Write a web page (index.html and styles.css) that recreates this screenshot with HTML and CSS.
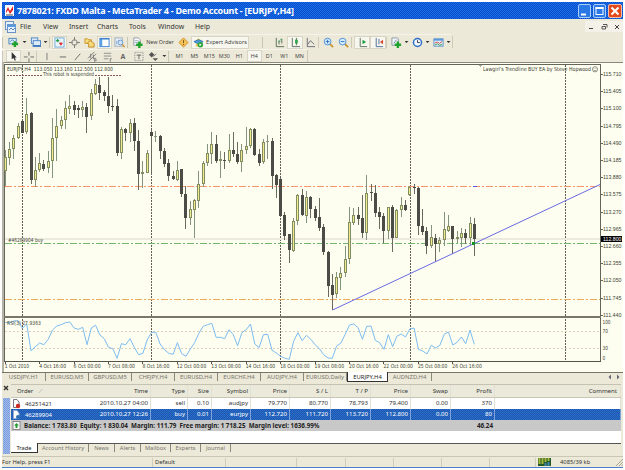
FILE: index.html
```html
<!DOCTYPE html>
<html lang="en">
<head>
    <meta charset="UTF-8">
    <title>7878021: FXDD Malta - MetaTrader 4</title>
    <link rel="stylesheet" href="styles.css">
</head>
<body>
<div class="window">
    <div class="titlebar">
        <svg class="logo" width="9" height="11" viewBox="0 0 9 11"><rect width="9" height="11" fill="#fff"/><path d="M1 6L3 2L5 6L8 1V5L5 9L3 5L1 8Z" fill="#e02020"/><path d="M1 10H8" stroke="#444"/></svg>
        <span class="title">7878021: FXDD Malta - MetaTrader 4 - Demo Account - [EURJPY,H4]</span>
        <div class="winbtns">
            <svg width="13" height="14" viewBox="0 0 13 14"><rect x=".5" y=".5" width="12" height="13" rx="1.5" fill="#2878e6" stroke="#a9ccf8"/><path d="M3 10.5H8" stroke="#fff" stroke-width="2"/></svg>
            <svg width="13" height="14" viewBox="0 0 13 14"><rect x=".5" y=".5" width="12" height="13" rx="1.5" fill="#2878e6" stroke="#a9ccf8"/><rect x="3" y="3.5" width="7" height="7" fill="none" stroke="#fff"/><path d="M2.5 4H10.5" stroke="#fff" stroke-width="2"/></svg>
            <svg width="14" height="14" viewBox="0 0 14 14"><rect x=".5" y=".5" width="13" height="13" rx="1.5" fill="#e4491c" stroke="#f3bda8"/><path d="M3.5 3.5L10.5 10.5M10.5 3.5L3.5 10.5" stroke="#fff" stroke-width="2"/></svg>
        </div>
    </div>

    <div class="menubar">
        <svg class="menu-icon" width="11" height="12" viewBox="0 0 11 12"><rect x=".5" y=".5" width="8" height="8" fill="#e8f2fc" stroke="#6a94c8"/><rect x="2.500" y="3.500" width="8" height="8" fill="#e8f2fc" stroke="#6a94c8"/><path d="M2 5H11" stroke="#5a9be0" stroke-width="2"/><path d="M4 9L6 7L8 9L10 7" stroke="#5a86b8" fill="none"/></svg>
        <span class="m-file">File</span><span class="m-view">View</span><span class="m-insert">Insert</span><span class="m-charts">Charts</span><span class="m-tools">Tools</span><span class="m-window">Window</span><span class="m-help">Help</span>
        <div class="mdi">
            <svg width="12" height="11" viewBox="0 0 12 11"><path d="M4 7.500H8" stroke="#444"/></svg>
            <svg width="12" height="11" viewBox="0 0 12 11"><path d="M5 3.500H9V6.500M4 5.500H7.500V8H4Z" stroke="#555" fill="none"/></svg>
            <svg width="12" height="11" viewBox="0 0 12 11"><path d="M4 4L8 8M8 4L4 8" stroke="#444"/></svg>
        </div>
    </div>

    <div class="toolbar standard">
        <i class="grip"></i>
        <span class="tool"><svg viewBox="0 0 12 12"><rect x="1" y="1.500" width="8" height="6" fill="#d8ecf8" stroke="#4b86bb"/><path d="M2.500 5L5 3L7 5" stroke="#4b86bb" fill="none"/><path d="M7.500 4.500V11M4.500 7.700H11" stroke="#1fa12e" stroke-width="2.600"/></svg></span>
        <i class="drop"></i>
        <span class="tool w14"><svg viewBox="0 0 12 12"><rect x="1.500" y="1" width="7" height="6" fill="#dcebf8" stroke="#4b82c4"/><rect x="3.500" y="4" width="8" height="6" fill="#dcebf8" stroke="#4b82c4"/><path d="M3 9.700H12" stroke="#3e7ac0" stroke-width="2"/></svg></span>
        <i class="drop"></i>
        <i class="sep"></i>
        <span class="tool pressed"><svg viewBox="0 0 12 12"><rect x="1" y="1" width="10" height="10" fill="#e9f4fb" stroke="#6fa8d6"/><path d="M2.500 4L4 2.500L5.500 4ZM3 5H5" stroke="#1b9a40" fill="#1b9a40"/><path d="M6 6.500H9L7.500 9Z" fill="#d33" stroke="#d33"/></svg></span>
        <span class="tool"><svg viewBox="0 0 12 12"><circle cx="6" cy="6" r="3" fill="none" stroke="#777"/><path d="M6 0V4M6 8V12M0 6H4M8 6H12" stroke="#777"/></svg></span>
        <span class="tool"><svg viewBox="0 0 12 12"><path d="M1 2H4L5 3H8V7H1Z" fill="#f6dc83" stroke="#c89628"/><path d="M4 6L7 4L11 7V11H5V8Z" fill="#f8d878" stroke="#c08a28"/></svg></span>
        <span class="tool pressed"><svg viewBox="0 0 12 12"><rect x="1" y="1.500" width="10" height="9" fill="#fff" stroke="#3c80cc"/><rect x="1" y="2" width="2.500" height="8" fill="#5aa0e8"/><path d="M1 2H11" stroke="#3c80cc" stroke-width="1.500"/></svg></span>
        <span class="tool"><svg viewBox="0 0 12 12"><rect x="1" y="1" width="8" height="9" fill="#eef3f8" stroke="#9ab"/><path d="M3 4V8M5 3V6" stroke="#7a9cc4"/><circle cx="7" cy="6" r="2.600" fill="#cfe6fa" stroke="#6a98cc"/><path d="M9 8L11.500 11" stroke="#c99432" stroke-width="1.500"/></svg></span>
        <i class="grip wide"></i>
        <span class="tool neworder"><svg viewBox="0 0 12 12"><path d="M2 1H7L9 3V9H2Z" fill="#fff" stroke="#8a98a8"/><path d="M3 4H7M3 6H7" stroke="#9ab"/><path d="M8 5V12M4.500 8.500H11.500" stroke="#1fa12e" stroke-width="2.600"/></svg>New Order</span>
        <span class="tool w16"><svg viewBox="0 0 12 12"><path d="M6 1L11 6L6 11L1 6Z" fill="#f3c25a" stroke="#d08e20"/><path d="M6 3.500V6.500M6 7.500V8.700" stroke="#7b4a10"/></svg></span>
        <span class="tool pressed experts"><svg viewBox="0 0 12 12"><path d="M3 4Q6-1 9 4" fill="#f0c850"/><path d="M1 5L6 3L11 5L6 8Z" fill="#4f9bd8" stroke="#3276b4"/><path d="M3 7V10L6 11V8" fill="#f0c850"/><circle cx="8" cy="8.500" r="3" fill="#27a53a"/><path d="M7 7L9.500 8.500L7 10Z" fill="#fff"/></svg>Expert Advisors</span>
        <i class="gap"></i>
        <i class="grip far"></i>
        <span class="tool w16"><svg viewBox="0 0 12 12"><path d="M2.500 1V10.500H11M5.500 4V8M8.500 2V7" stroke="#556b55" fill="none"/><path d="M5 4.500H7M7 2.500H8.500" stroke="#1d9a48"/></svg></span>
        <span class="tool w16 pressed"><svg viewBox="0 0 12 12"><path d="M2.500 1V10.500H11M7 1V9" stroke="#556b55" fill="none"/><rect x="5.500" y="3" width="3" height="4" fill="#2ca84c"/></svg></span>
        <span class="tool"><svg viewBox="0 0 12 12"><path d="M2.500 1V10.500H11M3 8L6 4L10 8" stroke="#667" fill="none"/></svg></span>
        <i class="sep"></i>
        <span class="tool"><svg viewBox="0 0 12 12"><path d="M7 7L11 11" stroke="#c99432" stroke-width="2"/><circle cx="5" cy="5" r="3.700" fill="#d4ebfc" stroke="#4a8fd6"/><path d="M3 5H7M5 3V7" stroke="#2c6fc0"/></svg></span>
        <span class="tool"><svg viewBox="0 0 12 12"><path d="M7 7L11 11" stroke="#c99432" stroke-width="2"/><circle cx="5" cy="5" r="3.700" fill="#d4ebfc" stroke="#4a8fd6"/><path d="M3 5H7" stroke="#2c6fc0"/></svg></span>
        <i class="sep"></i>
        <span class="tool w16 pressed"><svg viewBox="0 0 12 12"><path d="M3.500 1V10.500H11" stroke="#556b55" fill="none"/><path d="M6 3L10 5.500L6 8Z" fill="#20a040"/></svg></span>
        <span class="tool w16 pressed"><svg viewBox="0 0 12 12"><path d="M3.500 1V10.500H11M6.500 2V8" stroke="#4a6a9a" fill="none"/><path d="M11 3L7.500 5.500L11 8Z" fill="#d84830"/></svg></span>
        <i class="sep"></i>
        <span class="tool w14"><svg viewBox="0 0 12 12"><path d="M1 1H7L8 2V9H1Z" fill="#f2f4f6" stroke="#8a98a8"/><path d="M3 7L6 3" stroke="#78a"/><path d="M7.500 5V12M4 8.500H11" stroke="#1fa12e" stroke-width="2.600"/></svg></span>
        <i class="drop"></i>
        <span class="tool w14"><svg viewBox="0 0 12 12"><circle cx="6" cy="6" r="4.400" fill="#eff7ff" stroke="#2d6ec4" stroke-width="1.600"/><path d="M6 3.500V6H8.500" stroke="#335" fill="none"/></svg></span>
        <i class="drop"></i>
        <span class="tool w14"><svg viewBox="0 0 12 12"><rect x="1" y="2" width="10" height="8" fill="#e6f2fb" stroke="#5a90c8"/><path d="M1 3H11" stroke="#5a98dc" stroke-width="2"/><path d="M2 6.500L5 5.500L7 7L10 5" stroke="#c44" fill="none"/><path d="M2 8.500L5 7.500L7 9L10 8" stroke="#3a9a50" fill="none"/></svg></span>
        <i class="drop"></i>
        <i class="end"></i>
    </div>

    <div class="toolbar line">
        <i class="grip"></i>
        <span class="tool pressed"><svg viewBox="0 0 12 12"><path d="M4 1V9L6 7.500L7.500 10.500L8.500 10L7.500 7H9.500Z" fill="#333"/></svg></span>
        <span class="tool"><svg viewBox="0 0 12 12"><path d="M6.500 1V5M6.500 8V12M1 6.500H5M8 6.500H12" stroke="#666"/></svg></span>
        <i class="sep"></i>
        <span class="tool"><svg viewBox="0 0 12 12"><path d="M6.500 2V10" stroke="#777"/></svg></span>
        <span class="tool"><svg viewBox="0 0 12 12"><path d="M3 6.500H10" stroke="#666"/></svg></span>
        <span class="tool"><svg viewBox="0 0 12 12"><path d="M3 10L9 3" stroke="#666"/></svg></span>
        <span class="tool"><svg viewBox="0 0 12 12"><path d="M1 8L8 1M2 11L10 3M4 3V8M7 4V9M8 10H11M8 8H10M8.500 8V12" stroke="#777" fill="none"/></svg></span>
        <span class="tool"><svg viewBox="0 0 12 12"><path d="M2 2.500H10M2 5.500H10M2 8.500H7M9 8V12M9 8.500H11" stroke="#888" fill="none"/></svg></span>
        <span class="tool letter">A</span>
        <span class="tool"><svg viewBox="0 0 12 12"><rect x="2" y="1.500" width="9" height="9" fill="none" stroke="#888" stroke-dasharray="1 1"/><path d="M4 4.500H9M6.500 4V9" stroke="#666"/></svg></span>
        <span class="tool"><svg viewBox="0 0 12 12"><path d="M1 4L4 1L7 4L4 7ZM5 8H11L8 11Z" fill="#555"/><path d="M6 6L9 3" stroke="#777"/></svg></span>
        <i class="drop"></i>
        <i class="grip"></i>
        <span class="tf">M1</span><span class="tf">M5</span><span class="tf">M15</span><span class="tf">M30</span><span class="tf">H1</span><span class="tf pressed">H4</span><span class="tf">D1</span><span class="tf">W1</span><span class="tf">MN</span>
        <i class="end"></i>
    </div>

    <svg class="chart" id="chart" width="621" height="310" viewBox="2 62 621 310"></svg>

    <div class="chart-tabs">
        <span class="t1">USDJPY,H1</span><span class="t2">EURUSD,M5</span><span class="t3">GBPUSD,M5</span><span class="t4">CHFJPY,H4</span><span class="t5">EURUSD,H4</span><span class="t6">EURCHF,H4</span><span class="t7">AUDJPY,H4</span><span class="t8">EURUSD,Daily</span><span class="t9 active">EURJPY,H4</span><span class="t10">AUDNZD,H4</span>
        <svg class="scroll" width="14" height="8" viewBox="0 0 14 8"><path d="M4 1.500V6.500L1.500 4ZM10 1.500V6.500L12.500 4Z" fill="#667"/></svg>
    </div>

    <div class="terminal">
        <div class="side">
            <svg width="8" height="8" viewBox="0 0 8 8"><path d="M2 2L6 6M6 2L2 6" stroke="#333" stroke-width="1.400"/></svg>
            <div class="side-label"></div>
        </div>
        <div class="panel">
            <div class="row head">
                <span class="first">Order &nbsp; <em>∕</em></span><span>Time</span><span>Type</span><span>Size</span><span>Symbol</span><span>Price</span><span>S / L</span><span>T / P</span><span>Price</span><span>Swap</span><span>Profit</span><span>Comment</span>
            </div>
            <div class="row">
                <span class="first"><svg width="9" height="10" viewBox="0 0 9 10"><path d="M1.500.500H5L7 3V8.500H1.500Z" fill="#fff" stroke="#777"/><circle cx="6" cy="7" r="2.200" fill="#d02a20"/></svg>46251421</span><span>2010.10.27 04:00</span><span>sell</span><span>0.10</span><span>audjpy</span><span>79.770</span><span>80.770</span><span>78.793</span><span>79.400</span><span>0.00</span><span>370</span><span></span>
            </div>
            <div class="row selected">
                <span class="first"><svg width="9" height="10" viewBox="0 0 9 10"><path d="M1.500.500H5L7 3V8.500H1.500Z" fill="#fff" stroke="#9ac"/><circle cx="6" cy="7" r="2" fill="#2b70b0"/></svg>46289904</span><span>2010.10.27 12:26</span><span>buy</span><span>0.01</span><span>eurjpy</span><span>112.720</span><span>111.720</span><span>113.720</span><span>112.800</span><span>0.00</span><span>80</span><span></span>
            </div>
            <div class="summary">
                <svg width="9" height="9" viewBox="0 0 9 9"><rect x="1" y=".5" width="7" height="8" fill="#fff" stroke="#888"/><path d="M4.500 2L7 4.500H5.500V7H3.500V4.500H2Z" fill="#259a35"/></svg>
                <span class="balance">Balance: 1 783.80&nbsp; Equity: 1 830.04&nbsp; Margin: 111.79&nbsp; Free margin: 1 718.25&nbsp; Margin level: 1636.99%</span>
                <span class="total">46.24</span>
            </div>
            <div class="blank"></div>
            <div class="term-tabs">
                <span class="active">Trade</span><span class="w51">Account History</span><span class="w26">News</span><span class="w26">Alerts</span><span class="w30">Mailbox</span><span class="w30">Experts</span><span class="w30">Journal</span>
            </div>
        </div>
    </div>

    <div class="status">
        <span class="s1">For Help, press F1</span><span class="s2">Default</span><span class="s3"></span><span class="s4"></span><span class="s5"></span><span class="s6"></span><span class="s7"></span><span class="s8"></span>
        <svg width="13" height="8" viewBox="0 0 13 8"><rect width="13" height="8" fill="#24592c"/><path d="M1.500 0V6M4.500 0V6M7.500 0V4M10.500 0V3" stroke="#a4b83c" stroke-width="2"/><path d="M7.500 5V8M10.500 4V8" stroke="#3d86a8" stroke-width="2"/></svg>
        <span class="traffic">4085/39 kb</span>
        <svg class="resize" width="8" height="8" viewBox="0 0 8 8"><path d="M1 8L8 1M4 8L8 4M6.500 8L8 6.500" stroke="#a9a694"/></svg>
    </div>
</div>
<script src="chart.js"></script>
</body>
</html>
```
FILE: styles.css
```css
* {
    margin: 0;
    padding: 0;
    box-sizing: border-box;
}

body {
    width: 625px;
    height: 470px;
    padding: 2px;
    background: #fff;
    overflow: hidden;
    font-family: "Noto Sans", sans-serif;
    font-size: 6.1px;
    color: #333;
}

.window {
    width: 621px;
    height: 466px;
    background-color: #ece9d8;
    border-bottom: 1px solid #4b7fc8;
    display: flex;
    flex-direction: column;
}

svg {
    display: block;
    flex: none;
}

/* title bar */
.titlebar {
    height: 17px;
    display: flex;
    align-items: center;
    padding: 0 1px 0 3px;
    background: repeating-conic-gradient(#0d4cc6 0 25%, #1670ec 0 50%) 0 0 / 2px 2px;
}

.title {
    margin-left: 3px;
    font-size: 9px;
    font-weight: bold;
    letter-spacing: -0.26px;
    color: #fff;
    white-space: nowrap;
}

.winbtns {
    margin-left: auto;
    display: flex;
    gap: 2px;
}

/* menu */
.menubar {
    height: 15px;
    display: flex;
    align-items: center;
    padding-left: 3px;
    font-size: 6.9px;
    white-space: nowrap;
}

.menu-icon { margin-right: 4px; }
.m-file { width: 23px; }
.m-view { width: 26px; }
.m-insert { width: 28px; }
.m-charts { width: 32px; }
.m-tools { width: 29px; }
.m-window { width: 37px; }

.mdi {
    display: flex;
    margin-left: auto;
    gap: 1px;
    background: #f4f2e8;
}

/* toolbars */
.toolbar {
    display: flex;
    align-items: center;
    border-top: 1px solid #f6f4ea;
    color: #444;
}

.standard {
    height: 15px;
    width: 449px;
}

.line {
    height: 13px;
    width: 306px;
}

.toolbar i {
    display: block;
    flex: none;
}

.grip {
    width: 4px;
    height: 11px;
    border-left: 1px solid #c9c6b4;
}

.grip.far { width: 9px; margin-left: 1px; }

.sep {
    width: 3px;
    height: 11px;
    border-left: 1px solid #cdcab8;
}

.gap { width: 12px; }

.end {
    width: 1px;
    height: 12px;
    background: #cdcab8;
}

.drop {
    width: 4px;
    height: 2px;
    margin: 0 1.5px;
    background: #333;
    clip-path: polygon(0 0, 100% 0, 50% 100%);
}

.tool {
    width: 15px;
    height: 13px;
    display: flex;
    align-items: center;
    justify-content: center;
    flex: none;
    white-space: nowrap;
}

.tool svg {
    width: 11px;
    height: 11px;
}

.w14 { width: 14px; }
.w16 { width: 16px; }

.pressed {
    background: #f7f6ef;
    border: 1px solid #d8d5c5;
}

.neworder {
    width: 44px;
    gap: 3px;
    font-size: 5.4px;
}

.experts {
    width: 58px;
    gap: 2px;
    font-size: 5.6px;
}

.line .tool {
    height: 12px;
    width: 15.2px;
}

.letter {
    font-weight: bold;
    font-size: 7px;
    color: #666;
}

.tf {
    width: 15px;
    height: 12px;
    display: flex;
    align-items: center;
    justify-content: center;
    flex: none;
    font-size: 5.4px;
}

/* chart */
.chart {
    font-family: "DejaVu Sans", sans-serif;
    font-size: 5.6px;
}

.chart text { fill: #3f3f36; }

.chart .price {
    font-family: "Liberation Sans", sans-serif;
    font-size: 5.4px;
}

.chart .last { fill: #fff; }

/* chart tabs */
.chart-tabs {
    height: 10px;
    display: flex;
    border-top: 1px solid #77756a;
    color: #77756c;
    font-size: 5.9px;
    line-height: 8px;
    flex: none;
    white-space: nowrap;
}

.chart-tabs span {
    height: 8px;
    border-right: 1px solid #8c897a;
    text-align: center;
}

.t1 { width: 44px; }
.t2, .t3, .t4, .t5, .t6, .t7 { width: 43px; }
.t8 { width: 43px; }
.t10 { width: 44px; }

.chart-tabs .active {
    width: 41px;
    height: 10px;
    margin-top: -1px;
    padding-top: 1px;
    background: #fff;
    border: 1px solid #333;
    border-top: 0;
    color: #222;
}

.scroll {
    margin-left: auto;
    margin-right: 2px;
}

/* terminal */
.terminal {
    height: 70px;
    margin-top: 2px;
    display: flex;
}

.side {
    width: 9px;
    display: flex;
    flex-direction: column;
}

.side-label {
    flex: 1;
    width: 7px;
    margin: 6px 0 0 1px;
    background: repeating-conic-gradient(#7f9fdc 0 25%, #9db8ec 0 50%) 0 0 / 2px 2px;
}

.panel {
    width: 610px;
    border-top: 1px solid #c5c2b2;
}

.row {
    height: 11px;
    display: grid;
    grid-template-columns: 47px 93px 37px 24px 39px 39px 41px 40px 40px 40px 44px 126px;
    background: #fff;
    line-height: 10px;
}

.row span {
    text-align: right;
    padding-right: 2px;
    border-right: 1px solid #e3e1d6;
    white-space: nowrap;
}

.row .first {
    display: flex;
    align-items: center;
    border-right: 0;
    padding-left: 1px;
    gap: 4px;
    font-size: 5.9px;
}

.head {
    height: 13px;
    background: #ebe9da;
    border-bottom: 1px solid #c9c6b6;
    line-height: 12px;
}

.head .first { padding-left: 6px; }
.head em { color: #999; }
.head span:last-child { padding-right: 3px; }

.selected {
    color: #fff;
    background: repeating-conic-gradient(#1c55b4 0 25%, #2b70c4 0 50%) 0 0 / 2px 2px;
}

.selected span { border-color: #7da2dc; }

.summary {
    height: 11px;
    display: flex;
    align-items: center;
    background: #c8c8c8;
    padding-left: 1px;
    font-weight: bold;
    font-size: 6.25px;
    color: #222;
    white-space: nowrap;
}

.balance { margin-left: 3px; }

.total {
    margin-left: auto;
    margin-right: 128px;
}

.blank {
    height: 13px;
    background: #fff;
    border-bottom: 1px solid #555;
}

.term-tabs {
    height: 10px;
    display: flex;
    line-height: 9px;
    font-size: 5.7px;
    color: #77756c;
    white-space: nowrap;
}

.term-tabs span {
    height: 8px;
    text-align: center;
    border-right: 1px solid #8c897a;
}

.term-tabs .active {
    width: 27px;
    height: 10px;
    margin-top: -1px;
    background: #fff;
    border-right: 1px solid #333;
    border-bottom: 1px solid #333;
    color: #222;
    line-height: 10px;
}

.term-tabs .w51 { width: 51px; }
.term-tabs .w26 { width: 26px; }
.term-tabs .w30 { width: 30px; }

/* status bar */
.status {
    margin-top: 2px;
    flex: 1;
    display: flex;
    align-items: center;
    border-top: 1px solid #c9c6b6;
    font-size: 5.8px;
    white-space: nowrap;
}

.status span {
    height: 9px;
    line-height: 9px;
    border-right: 1px solid #cfccbc;
}

.s1 { width: 151px; }
.status .s2 { width: 73px; padding-left: 2px; }
.s3 { width: 71px; }
.s4 { width: 49px; }
.s5 { width: 48px; }
.s6 { width: 48px; }
.s7 { width: 48px; }
.s8 { width: 46px; }

.status svg { margin-left: 2px; }

.status .traffic {
    margin-left: 9px;
    border: 0;
}

.status .resize { margin-left: auto; }
```
FILE: chart.js
```js
const svg = document.getElementById('chart');
const STEP = 4.304;
const LEFT = 5.2;

// high, low, body top, body bottom, 1 = rising bar
const bars = [
    [150,186,157,171,1],[142,165,149,158,1],[135,159,138,149,1],[123,139,126,138,1],[121,133,121,133,0],
    [98,134,114,132,1],[112,184,113,180,0],[157,187,170,180,1],[153,172,163,170,1],[160,171,164,169,0],
    [151,173,161,168,1],[118,178,138,161,1],[109,161,126,138,1],[116,129,120,126,1],[101,129,108,120,1],
    [95,114,106,109,1],[101,115,105,110,0],[105,118,108,110,0],[101,117,107,110,1],[103,133,107,117,0],
    [89,120,93,116,1],[79,95,84,94,1],[77,100,85,93,0],[90,101,92,96,0],[77,113,96,106,0],
    [95,111,106,107,0],[99,156,106,153,0],[127,159,129,153,1],[128,141,129,133,0],[119,142,123,133,1],
    [118,151,123,141,0],[130,190,141,174,0],[161,188,172,174,1],[150,173,153,173,1],[130,175,132,136,0],
    [131,142,136,137,1],[135,159,136,151,0],[148,167,151,164,0],[159,181,163,176,0],[171,180,176,179,0],
    [161,181,170,180,1],[169,197,169,194,0],[186,229,194,218,0],[201,225,209,218,1],[199,238,200,210,1],
    [171,208,184,201,1],[161,187,163,184,1],[144,166,153,163,1],[132,164,144,154,1],[135,163,144,161,0],
    [151,178,159,161,1],[152,169,160,161,0],[134,163,150,161,1],[132,157,150,154,0],[142,164,154,162,0],
    [144,172,150,162,1],[127,154,146,150,1],[128,148,129,146,1],[128,156,129,155,0],[149,166,154,163,0],
    [139,164,142,162,1],[135,159,141,142,1],[138,189,141,176,0],[174,198,175,185,0],[178,217,179,216,0],
    [212,240,215,236,0],[234,263,234,250,0],[218,252,221,251,1],[194,225,195,221,1],[189,216,195,215,0],
    [191,223,197,216,1],[196,218,197,209,0],[206,221,209,218,0],[198,231,217,228,0],[224,255,227,252,0],
    [251,297,252,286,0],[274,310,285,295,0],[272,298,277,294,1],[267,290,273,278,1],[246,277,259,273,1],
    [207,264,222,259,1],[208,225,215,223,1],[207,225,215,219,0],[195,238,218,233,0],[175,240,193,233,1],
    [184,201,192,193,0],[185,217,193,213,0],[207,229,212,217,0],[213,243,216,231,0],[207,239,207,231,1],
    [205,252,207,238,0],[209,238,210,238,1],[197,217,205,210,1],[200,211,205,210,0],[186,196,187,195,1],
    [184,194,187,188,0],[187,235,188,226,0],[209,235,226,232,0],[227,254,231,246,0],[225,248,237,246,1],
    [234,262,238,244,0],[237,252,240,244,1],[212,246,229,240,1],[215,232,226,231,1],[226,254,226,239,0],
    [231,243,237,239,1],[228,247,233,238,1],[229,244,233,238,0],[217,245,223,238,1],[218,256,224,239,0]
];

// RSI curve, thirds of a pixel below y = 310
const rsi = [
    37,39,33,32,55,42,122,110,99,104,88,60,48,44,38,36,54,58,52,104,54,46,75,86,112,116,145,101,104,86,
    112,134,130,90,67,67,102,119,130,133,98,131,139,117,98,70,49,44,40,82,82,86,59,74,107,68,59,42,102,113,
    74,73,121,129,139,145,148,94,68,92,76,88,104,116,134,144,145,108,99,73,45,42,53,88,49,48,91,98,118,74,
    110,79,72,81,57,54,118,123,132,106,114,106,73,66,105,97,81,101,60,103
];

const times = ['1 Oct 2010', '4 Oct 16:00', '6 Oct 00:00', '7 Oct 08:00', '8 Oct 16:00', '12 Oct 00:00',
    '13 Oct 08:00', '14 Oct 16:00', '18 Oct 00:00', '19 Oct 08:00', '20 Oct 16:00', '22 Oct 00:00',
    '25 Oct 08:00', '26 Oct 16:00'];

function rect(x, y, w, h, fill, extra = '') {
    return `<rect x="${x}" y="${y}" width="${w}" height="${h}" fill="${fill}" ${extra}/>`;
}

function line(x1, y1, x2, y2, color, dash = '') {
    return `<line x1="${x1}" y1="${y1}" x2="${x2}" y2="${y2}" stroke="${color}" stroke-dasharray="${dash}"/>`;
}

function text(x, y, str, width, cls = '') {
    return `<text x="${x}" y="${y}" class="${cls}" textLength="${width}" lengthAdjust="spacingAndGlyphs">${str}</text>`;
}

let out = '';

// frame and panes
out += rect(2, 62, 621, 310, '#fdfef0');
out += rect(2, 62, 621, 1, '#8b897c') + rect(2, 62, 2, 310, '#b5b3a5');
out += rect(4, 64, 597, 1, '#66655a') + rect(4, 64, 1, 297, '#66655a');
out += rect(600, 64, 1, 297, '#66655a') + rect(4, 316, 597, 2, '#78776a') + rect(4, 361, 597, 1, '#55544a');

// period separators
[22.5, 151.5, 280.5, 410.5, 565.5].forEach(x => {
    out += line(x, 65, x, 316, '#625e56', '2 1') + line(x, 319, x, 361, '#625e56', '2 1');
});

// levels
out += rect(5, 238, 595, 2, '#eceadd');
out += line(5, 186.5, 600, 186.5, '#fa9468', '7 2 2 2');
out += line(5, 243.5, 600, 243.5, '#74b56e', '7 2 2 2');
out += line(5, 299.5, 600, 299.5, '#eeaa58', '7 2 2 2');
out += line(473, 186.5, 477, 186.5, '#5a5ae0');
out += line(5, 331.5, 600, 331.5, '#dcd0bb', '2 2') + line(5, 348.5, 600, 348.5, '#dcd0bb', '2 2');
out += line(7, 75.5, 42, 75.5, '#8a5a5a', '2 1') + line(95, 75.5, 122, 75.5, '#8a5a5a', '2 1');

// candles
bars.forEach(([high, low, top, bottom, up], i) => {
    const x = Math.round(LEFT + i * STEP - 0.5);
    out += rect(x, high, 1, low - high, up ? '#84937e' : '#6a6a5e');
    if (up && bottom - top > 1) {
        out += rect(x - 0.5, top + 0.5, 2, bottom - top - 1, '#f1eb8c', 'stroke="#828c62" stroke-width="1" shape-rendering="auto"');
    } else {
        out += rect(x - 1, top, 3, Math.max(1, bottom - top), up ? '#8a957a' : '#4c4c47');
    }
});

// trend line
out += '<path d="M332.5 310L600 184.5" stroke="#6a6ae2" fill="none" shape-rendering="auto"/>';
out += '<circle cx="473.5" cy="243.5" r="1.5" fill="#129020"/>';

const points = rsi.map((v, i) => `${(LEFT + i * STEP).toFixed(1)},${(310 + v / 3).toFixed(1)}`).join(' ');
out += `<polyline points="${points}" stroke="#7dbcf0" fill="none" shape-rendering="auto"/>`;

// price scale
for (let i = 0; i < 15; i++) {
    const y = 74 + i * 17.2;
    out += rect(601, Math.round(y), 2, 1, '#66655a');
    out += text(603, y + 2, (115.71 - i * 0.305).toFixed(3), 18.5, 'price');
}
out += rect(601, 236, 21, 6, '#000');
out += text(603, 241, '112.800', 18.5, 'price last');
out += text(602.5, 324, '100', 8) + text(602.5, 333, '70', 5.5) + text(602.5, 350, '30', 5.5) + text(602.5, 360, '0', 2.7);

// time scale
times.forEach((t, i) => {
    const x = LEFT + i * STEP * 8;
    out += rect(Math.round(x - 0.5), 361, 1, 3, '#55544a');
    out += text(x - 0.5, 368, t, i === 0 ? 24.5 : i < 5 ? 27 : 29.5);
});

// labels
out += text(7, 71, 'EURJPY,H4&#160; 113.050 113.160 112.500 112.800', 106);
out += text(43, 76, 'This robot is suspended', 51);
out += text(483, 71, "Lawgirl's Trendline BUY EA by Steve Hopwood", 108);
out += '<circle cx="595" cy="69.3" r="2.6" fill="none" stroke="#66655a" stroke-width=".7" shape-rendering="auto"/>';
out += '<path d="M593.7 70Q595 71.5 596.3 70M594 68.3V69M596 68.3V69" fill="none" stroke="#66655a" stroke-width=".6" shape-rendering="auto"/>';
out += '<path d="M478 64.5H483L480.5 67Z" fill="#aaa9a0"/>';
out += text(8, 242, '#46289904 buy', 35);
out += text(7, 325, 'RSI(3) 27.9363', 34);

svg.setAttribute('shape-rendering', 'crispEdges');
svg.innerHTML = out;
```
